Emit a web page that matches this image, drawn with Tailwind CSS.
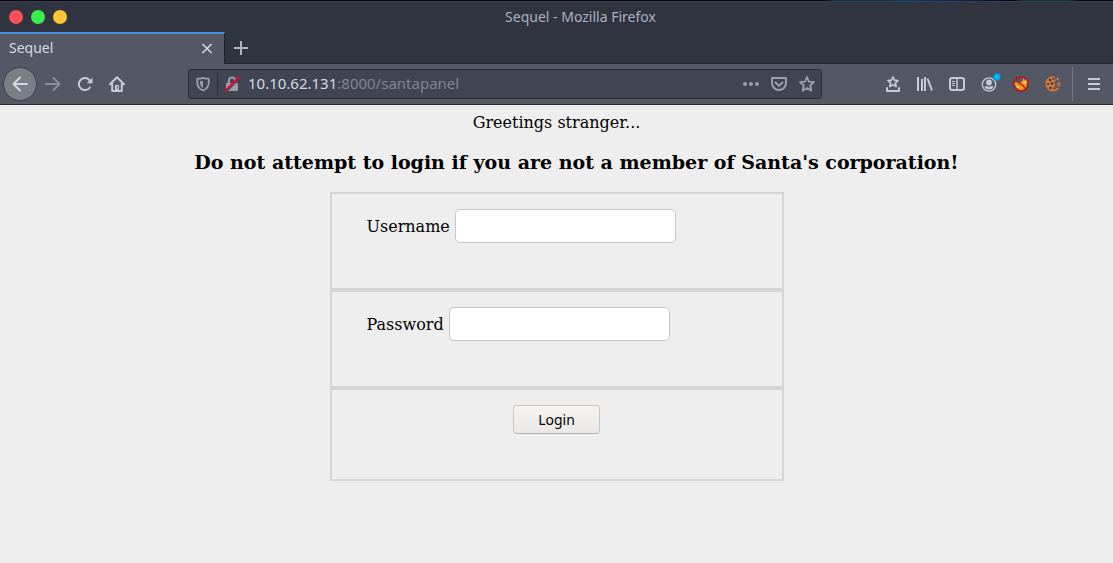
<!DOCTYPE html>
<html lang="en">
<head>
<meta charset="utf-8">
<meta name="viewport" content="width=device-width, initial-scale=1">
<title>Sequel</title>
<script src="https://cdn.jsdelivr.net/npm/@tailwindcss/browser@4"></script>
</head>
<body class="flex min-h-screen flex-col bg-[#eeeeee] font-['Noto_Sans',sans-serif] text-sm">
<header>
  <!-- Desktop edge above the window -->
  <div class="h-px bg-[linear-gradient(to_right,#050711_0%,#050711_74%,#063344_75%,#063344_80%,#003f78_81%,#06265a_85%,#050f2a_90%,#050711_91%,#063539_92%,#063539_96%,#050711_97%)]"></div>
  <!-- Window title bar -->
  <div class="grid h-[31px] grid-cols-[1fr_auto_1fr] items-center border-t border-[#3b3f4b] bg-[#30343f] px-[9px]">
    <div class="flex gap-2">
      <button aria-label="Close" class="size-[14px] rounded-full bg-[#f9505a]"></button>
      <button aria-label="Maximize" class="size-[14px] rounded-full bg-[#38ee4a]"></button>
      <button aria-label="Minimize" class="size-[14px] rounded-full bg-[#fdc638]"></button>
    </div>
    <div class="pl-12 text-[#a9b2c0]">Sequel - Mozilla Firefox</div>
    <div></div>
  </div>
  <!-- Tabs -->
  <div class="flex h-8 bg-[#30343f]">
    <div class="flex w-[225px] items-center justify-between border-t-2 border-r border-t-[#4a90e2] border-r-[#20232c] bg-[#545864] pr-[11px] pl-[9px] text-[#d3dae3]">
      <span class="pb-0.5">Sequel</span>
      <button aria-label="Close tab"><svg class="size-3" viewBox="0 0 12 12" fill="none" stroke="#d0d5df" stroke-width="1.6"><path d="M1.500 1l9 9M10.500 1l-9 9"/></svg></button>
    </div>
    <div class="flex flex-1 items-center border-b border-b-[#20232c] pl-2">
      <button aria-label="New tab"><svg class="size-4" viewBox="0 0 16 16" fill="none" stroke="#a9b4bf" stroke-width="2"><path d="M8 1v14M1 8h14"/></svg></button>
    </div>
  </div>
  <!-- Navigation toolbar -->
  <nav class="flex h-[41px] items-center border-b border-[#282b36] bg-[#545864] pr-[5px] pl-[3px] text-[#c6cad6]">
    <button aria-label="Back" class="grid size-[34px] place-items-center rounded-full border border-[#3d404b] bg-[#7a7d85]"><svg class="size-4" viewBox="0 0 16 16" fill="none" stroke="#d3d8e0" stroke-width="2" stroke-linecap="round" stroke-linejoin="round"><path d="M15 8H1.500M8 1.500L1.500 8 8 14.500"/></svg></button>
    <button aria-label="Forward" class="grid size-8 place-items-center text-[#8a8e99]" disabled><svg class="size-4" viewBox="0 0 16 16" fill="none" stroke="currentColor" stroke-width="2" stroke-linecap="round" stroke-linejoin="round"><path d="M1 8h13.500M8.500 2l6 6-6 6"/></svg></button>
    <button aria-label="Reload" class="grid size-8 place-items-center"><svg class="size-4" viewBox="0 0 16 16" fill="none" stroke="currentColor" stroke-width="2" stroke-linecap="round"><path d="M12.800 11.500A6 6 0 1 1 12.300 4"/><path d="M15.500 1.500v5.700H9.700z" fill="currentColor" stroke="none"/></svg></button>
    <button aria-label="Home" class="grid size-8 place-items-center"><svg class="size-4" viewBox="0 0 16 16" fill="none" stroke="currentColor" stroke-width="2" stroke-linejoin="round" stroke-linecap="round"><path d="M1 8.200L8 1.300l7 6.900M3.200 7v8h9.600V7"/><path d="M6 9h4v6H6z" fill="currentColor" stroke="none"/><path d="M8.500 10.500v2" stroke="#545864" stroke-width="1"/></svg></button>
    <div class="mx-[55px] flex h-[30px] min-w-0 flex-1 items-center rounded-[3px] border border-[#2a2d38] bg-[#404551] text-[#9a9fac]">
      <svg class="ml-1.5 size-4 shrink-0" viewBox="0 0 16 16" fill="none" stroke="currentColor" stroke-width="1.800" stroke-linejoin="round"><path d="M8 1.800C6.300 2.400 4.300 2.700 2.300 2.700v4c0 3.700 2.100 6.200 5.700 7.800 3.600-1.600 5.700-4.100 5.700-7.800v-4c-2 0-4-.3-5.700-.9z"/><path d="M8 4.500C7 5 6 5.100 5 5.200v1.500c0 2.200 1.100 4 3 5.200z" fill="currentColor" stroke="none"/></svg>
      <span class="ml-1.5 h-[22px] w-px bg-[#2c2f3a]"></span>
      <svg class="ml-1.5 size-4 shrink-0" viewBox="0 0 16 16"><path d="M4.800 7V4.800a3.200 3.200 0 0 1 6.400 0V7" fill="none" stroke="#9a9fac" stroke-width="2"/><rect x="2" y="7" width="12" height="8" rx="1" fill="#9a9fac"/><path d="M2.500 15.500l13-13" stroke="#404551" stroke-width="1.500"/><path d="M1.500 14.500l13-13" stroke="#f0003c" stroke-width="2" stroke-linecap="round"/></svg>
      <a href="#" aria-label="Page address" class="ml-2 min-w-0 flex-1 truncate text-[15px] text-[#808591]"><span class="text-[#d3dae3]">10.10.62.131</span>:8000/santapanel</a>
      <div class="flex items-center gap-3 pr-1.5">
        <button aria-label="Page actions"><svg class="size-4" viewBox="0 0 16 16" fill="currentColor"><circle cx="2" cy="8" r="2"/><circle cx="8" cy="8" r="2"/><circle cx="14" cy="8" r="2"/></svg></button>
        <button aria-label="Save to Pocket"><svg class="size-4" viewBox="0 0 16 16" fill="none" stroke="currentColor" stroke-width="2" stroke-linecap="round" stroke-linejoin="round"><path d="M1 2h14v5a7 7 0 0 1-14 0z"/><path d="M4.500 6.500L8 9.800l3.500-3.300"/></svg></button>
        <button aria-label="Bookmark this page"><svg class="size-4" viewBox="0 0 16 16" fill="none" stroke="currentColor" stroke-width="1.800" stroke-linejoin="round"><path d="M8 1l2 4.600 5 .5-3.800 3.400 1.200 5.200L8 12l-4.400 2.700 1.200-5.200L1 6.100l5-.5z"/></svg></button>
      </div>
    </div>
    <button aria-label="Bookmarks" class="grid size-8 place-items-center"><svg class="size-4" viewBox="0 0 16 16" fill="none" stroke="currentColor" stroke-width="1.800" stroke-linejoin="round" stroke-linecap="round"><path d="M8 1l1.500 3.200 3.500.4-2.600 2.300.8 3.600L8 8.700l-3.200 1.800.8-3.600L3 4.600l3.500-.4z" stroke-width="1.700"/><path d="M2 12v3h12v-3" stroke-width="2"/></svg></button>
    <button aria-label="Library" class="grid size-8 place-items-center"><svg class="size-4" viewBox="0 0 16 16" fill="none" stroke="currentColor" stroke-width="2"><path d="M1 1v14M5 3v12M8 1v14M10.500 2.500L15 14.500"/></svg></button>
    <button aria-label="Sidebars" class="grid size-8 place-items-center"><svg class="size-4" viewBox="0 0 16 16" fill="none" stroke="currentColor" stroke-width="2"><rect x="1" y="2" width="14" height="12" rx="2"/><path d="M8 2v12" stroke-width="1.500"/><path d="M3 5.500h3M3 7.500h3M3 9.500h3" stroke-width="1"/></svg></button>
    <button aria-label="Account" class="relative grid size-8 place-items-center"><svg class="size-4" viewBox="0 0 16 16"><circle cx="8" cy="8.500" r="6.700" fill="none" stroke="currentColor" stroke-width="1.300"/><circle cx="8" cy="6.500" r="2.900" fill="currentColor"/><path d="M3.200 10.800c1-.4 1.900-.8 2.600-.8a3.600 3.600 0 0 0 4.400 0c.7 0 1.600.4 2.600.8A5.500 5.500 0 0 1 8 13.500a5.500 5.500 0 0 1-4.800-2.700z" fill="currentColor"/></svg><span class="absolute top-1.5 right-[5px] size-[6px] rounded-full bg-[#00b3f4] ring-1 ring-[#167da9]"></span></button>
    <button aria-label="FoxyProxy" class="grid size-8 place-items-center"><svg class="size-4" viewBox="0 0 16 16"><path d="M1.500 8.500C1.500 5 3 6 4.500 7 6 6 8 6.500 9 5.500l1.500-3.500 1.300 2 2.200-.5c.5 2 .5 3-.3 4.500.3 3.500-2 6-5.500 6-2.500 0-5-2-6-5z" fill="#f29420"/><path d="M3.500 9.500c1.500 0 2 1 2.500 2.500l-2-.5zM10 6l3-1-1 3z" fill="#ffe5b8"/><path d="M5 8.300l2-.8M9.500 9.500l2 .5" stroke="#9a4a10"/><path d="M2.700 2.700l10.600 10.600" stroke="#cf0a0a" stroke-width="1.200"/><circle cx="8" cy="8" r="7.400" fill="none" stroke="#cf0a0a" stroke-width="1.100"/></svg></button>
    <button aria-label="Cookie manager" class="grid size-8 place-items-center"><svg class="size-4" viewBox="0 0 16 16"><path d="M9.500.5C5-.5.200 3 .200 8c0 4.500 3.500 7.700 7.800 7.700 3 0 5-1.200 6-3.200l-1.800-1-1.500.5-1.500-1.700 1-1.800-1.200-2L11 4.500l-1-1.700z" fill="#c9794a"/><path d="M1 5.500C0 10 3 14.500 7.500 15c2.500.3 4-.5 5.500-1.500-1 1.500-3 2.300-5 2.200C3 15.500-.5 11 .3 7z" fill="#a65328"/><g fill="#53281c"><circle cx="5" cy="4" r="1.200"/><circle cx="8.500" cy="3" r=".9"/><circle cx="3" cy="8" r="1.100"/><circle cx="7" cy="7.500" r="1.200"/><circle cx="5.500" cy="12" r="1.200"/><circle cx="9.500" cy="12.500" r="1"/></g><path d="M11.500 1.500l2.500 1-.5 2-2-.5zM12.500 6.500l3 .5.300 3-2.800.5-1.200-1.800z" fill="#c9794a"/><path d="M13.500 8.500h1.500" stroke="#7e3c23"/></svg></button>
    <span class="mx-[3px] h-[34px] w-px bg-[#777b86]"></span>
    <button aria-label="Open menu" class="ml-1 grid h-8 flex-none place-items-center px-2"><svg class="h-4 w-3" viewBox="0 0 12 16" fill="none" stroke="currentColor" stroke-width="2"><path d="M0 3h12M0 8h12M0 13h12"/></svg></button>
  </nav>
</header>
<!-- Page content -->
<main class="px-2 pt-2 pb-20 font-['DejaVu_Serif',serif] text-base leading-[19px] text-black">
  <p class="text-center">Greetings stranger...</p>
  <h1 class="mt-[19px] pl-10 text-center text-[19px] leading-[22px] font-bold">Do not attempt to login if you are not a member of Santa's corporation!</h1>
  <form class="mx-auto mt-[19px] w-full max-w-[454px]">
    <div class="border-2 border-[#d5d5d5] px-[35px] pt-[15px] pb-[45px]">
      <div class="flex items-center gap-[5px]">
        <label for="username">Username</label>
        <input id="username" type="text" class="h-[34px] w-[221px] rounded-[5px] border border-[#cbc5c1] bg-white px-2">
      </div>
    </div>
    <div class="border-2 border-[#d5d5d5] px-[35px] pt-[15px] pb-[45px]">
      <div class="flex items-center gap-[5px]">
        <label for="password">Password</label>
        <input id="password" type="password" class="h-[34px] w-[221px] rounded-[5px] border border-[#cbc5c1] bg-white px-2">
      </div>
    </div>
    <div class="flex justify-center border-2 border-[#d5d5d5] px-[35px] pt-[15px] pb-[45px]">
      <button type="submit" class="h-[29px] w-[87px] rounded border border-[#c9c5c1] border-b-[#b9b2ac] bg-linear-to-b from-[#f6f5f4] to-[#e9e8e6] font-['Noto_Sans',sans-serif] text-sm">Login</button>
    </div>
  </form>
</main>
</body>
</html>
